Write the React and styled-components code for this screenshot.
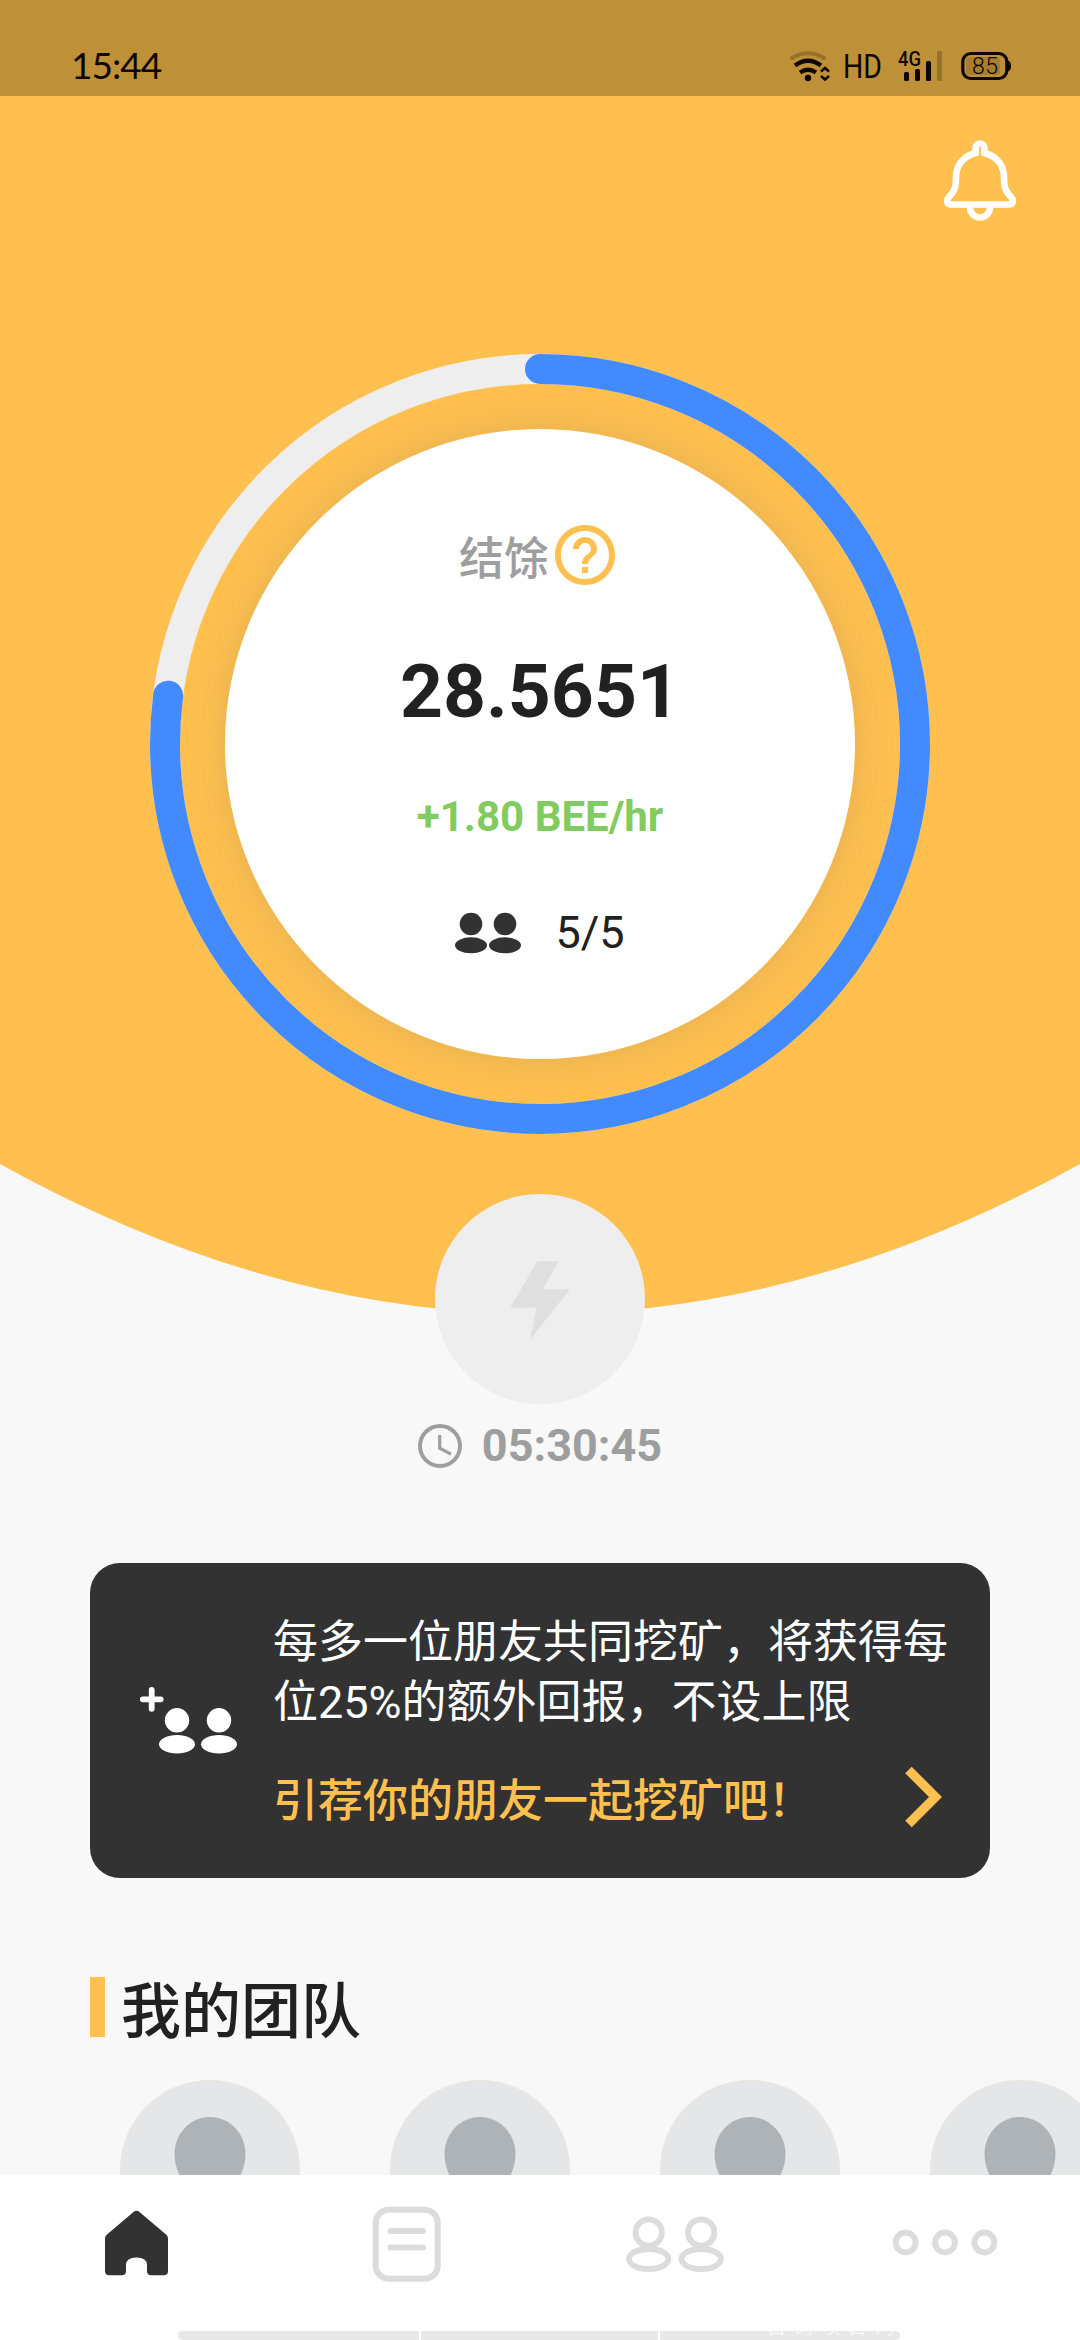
import styled, { createGlobalStyle } from "styled-components";
import { MdHelpOutline } from "react-icons/md";

const GlobalStyle = createGlobalStyle`
  * {
    box-sizing: border-box;
  }

  body {
    margin: 0;
    font-family: Roboto, "Noto Sans CJK SC", sans-serif;
    background-color: #f8f8f8;
  }

  svg {
    display: block;
    flex-shrink: 0;
  }
`;

const Screen = styled.div`
  display: flex;
  flex-direction: column;
  width: 1080px;
  height: 2340px;
  overflow: hidden;
  background-color: #f8f8f8;
`;

// Status bar
const StatusBar = styled.header`
  display: flex;
  justify-content: space-between;
  flex-shrink: 0;
  height: 96px;
  padding: 0 64px 0 71px;
  background-color: #be9139;
`;

const Clock = styled.span`
  padding-top: 42px;
  font-family: Lato, sans-serif;
  font-size: 37px;
  line-height: 46px;
  letter-spacing: -1px;
  color: #0d0700;
`;

const StatusIcons = styled.svg`
  font-family: Roboto, sans-serif;
`;

const Main = styled.main`
  flex: 1;
  min-height: 0;
  overflow: hidden;
`;

// Hero
const Hero = styled.section`
  display: grid;
  grid-template-columns: 1080px;

  & > * {
    grid-area: 1 / 1;
  }
`;

const HeroContent = styled.div`
  display: flex;
  flex-direction: column;
  align-items: center;
`;

const TopRow = styled.div`
  display: flex;
  justify-content: flex-end;
  align-self: stretch;
  padding: 43px 64px 0 0;
`;

const RingStack = styled.div`
  display: grid;
  place-items: center;
  width: 780px;
  height: 780px;
  margin-top: 131px;

  & > * {
    grid-area: 1 / 1;
  }
`;

const Dial = styled.div`
  display: flex;
  flex-direction: column;
  align-items: center;
  width: 630px;
  height: 630px;
  padding-top: 90px;
  border-radius: 50%;
  background-color: #fff;
  box-shadow: 0 0 45px rgba(100, 100, 100, 0.19);
`;

const BalanceLabel = styled.div`
  display: flex;
  align-items: center;
  height: 72px;
  font-size: 45px;
  font-weight: 500;
  color: #9e9e9e;
`;

const HelpIcon = styled(MdHelpOutline)`
  width: 72px;
  height: 72px;
  color: #ffc04f;
`;

const Balance = styled.div`
  margin-top: 56px;
  font-size: 75px;
  font-weight: 700;
  line-height: 88px;
  color: #212121;
`;

const Rate = styled.div`
  margin-top: 57px;
  font-size: 42px;
  font-weight: 700;
  line-height: 50px;
  color: #82cb61;
`;

const Members = styled.div`
  display: flex;
  align-items: center;
  gap: 34px;
  margin-top: 64px;
  font-size: 45px;
  line-height: 54px;
  color: #212121;
`;

const BoltButton = styled.button`
  display: grid;
  place-items: center;
  width: 210px;
  height: 210px;
  margin-top: 60px;
  padding: 0;
  border: none;
  border-radius: 50%;
  background-color: #eee;
`;

const Timer = styled.div`
  display: flex;
  align-items: center;
  gap: 20px;
  margin-top: 15px;
  font-size: 45px;
  font-weight: 700;
  line-height: 54px;
  color: #9e9e9e;
`;

// Invite card
const InviteCard = styled.section`
  display: flex;
  height: 315px;
  margin: 90px 90px 0;
  padding: 50px 40px 0 50px;
  border-radius: 30px;
  background-color: #323232;
`;

const InviteIcon = styled.svg`
  margin: 73px 36px 0 0;
`;

const InviteBody = styled.div`
  width: 680px;
`;

const InviteText = styled.p`
  margin: 0;
  font-size: 45px;
  line-height: 60px;
  color: #fff;
`;

const InviteAction = styled.div`
  display: flex;
  align-items: center;
  justify-content: space-between;
  height: 60px;
  margin-top: 39px;
  padding-right: 8px;
  font-size: 45px;
  font-weight: 500;
  line-height: 60px;
  color: #ffc04f;
`;

const Chevron = styled.svg`
  margin-bottom: 10px;
`;

// Team
const TeamTitle = styled.h2`
  display: flex;
  align-items: flex-start;
  gap: 16px;
  height: 60px;
  margin: 99px 0 0 90px;
  font-size: 60px;
  font-weight: 500;
  line-height: 71px;
  color: #212121;

  &::before {
    content: "";
    width: 15px;
    height: 60px;
    background-color: #ffc04f;
  }
`;

const TeamList = styled.div`
  display: flex;
  gap: 90px;
  margin-top: 43px;
  padding-left: 120px;
`;

const Avatar = styled.div`
  display: flex;
  justify-content: center;
  flex-shrink: 0;
  width: 180px;
  height: 180px;
  padding-top: 37px;
  border-radius: 50%;
  background-color: #e4e6e7;
  box-shadow: inset 0 1px 1px #efe8dc;
`;

// Bottom navigation
const BottomNav = styled.nav`
  display: flex;
  flex-direction: column;
  justify-content: space-between;
  flex-shrink: 0;
  height: 165px;
  background-color: #fff;
`;

const Tabs = styled.div`
  display: grid;
  grid-template-columns: repeat(4, 270px);
`;

const Tab = styled.a`
  display: grid;
  place-items: center;
  height: 138px;
  color: ${({ $active }) => ($active ? "#323232" : "#dcdcdc")};
`;

const Strip = styled.div`
  position: relative;
  display: grid;
  grid-template-columns: 241px 237px 240px;
  gap: 2px;
  width: 722px;
  height: 9px;
  margin-left: 178px;
`;

const StripPart = styled.div`
  background-color: #e8e8e8;

  &:first-child {
    border-radius: 5px 0 0 5px;
  }

  &:nth-child(3) {
    border-radius: 0 5px 5px 0;
  }
`;

const Watermark = styled.span`
  position: absolute;
  left: 589px;
  bottom: 0;
  font-family: "Noto Sans CJK SC", sans-serif;
  font-size: 19px;
  line-height: 28px;
  letter-spacing: 8px;
  white-space: nowrap;
  color: rgba(255, 255, 255, 0.7);
`;

const DAY = 24 * 3600;
const RING_RADIUS = 375;

function ProgressRing({ secondsLeft }) {
  const length = 2 * Math.PI * RING_RADIUS;
  const done = (1 - secondsLeft / DAY) * length;

  return (
    <svg width="780" height="780" viewBox="0 0 780 780" fill="none" strokeWidth="30">
      <circle cx="390" cy="390" r={RING_RADIUS} stroke="#eee" />
      <circle
        cx="390"
        cy="390"
        r={RING_RADIUS}
        stroke="#448aff"
        strokeLinecap="round"
        strokeDasharray={`${done} ${length}`}
        transform="rotate(-90 390 390)"
      />
    </svg>
  );
}

function PhoneStatus() {
  return (
    <StatusIcons width="228" height="96" viewBox="788 0 228 96" fill="none" stroke="#0d0700">
      {/* wifi */}
      <path d="M792 58q16-9.500 32 0" stroke="#98712a" strokeWidth="4" strokeLinecap="round" />
      <path d="M795 65.500q13-9.500 26 0M800 72.500q8-5.500 16 0" strokeWidth="4.200" />
      <circle cx="808" cy="78" r="3.200" fill="#0d0700" stroke="none" />
      <path d="M821 71.500l4-3.500 4 3.500M821 76l4 3.500 4-3.500" strokeWidth="2.600" />
      <g fill="#0d0700" stroke="none">
        <text x="843" y="78" fontSize="34" textLength="39" lengthAdjust="spacingAndGlyphs">
          HD
        </text>
        <text x="898" y="65.500" fontSize="20" fontWeight="500" textLength="23" lengthAdjust="spacingAndGlyphs">
          4G
        </text>
        {/* signal */}
        <rect x="904" y="72" width="5" height="9" rx="1.500" />
        <rect x="915" y="69" width="5" height="12" rx="1.500" />
        <rect x="926" y="61" width="5" height="20" rx="1.500" />
        <rect x="937" y="51" width="5" height="30" rx="1.500" fill="#98712a" />
        {/* battery */}
        <rect x="966" y="57" width="34" height="18" rx="4" fill="#a67d33" />
        <path d="M1008 60.500q3 1 3 5.500t-3 5.500z" />
        <text x="972" y="73.500" fontSize="23" fontWeight="300" textLength="26">
          85
        </text>
      </g>
      <rect x="962.800" y="53.500" width="44" height="25" rx="8" strokeWidth="3.200" />
    </StatusIcons>
  );
}

function Bell() {
  return (
    <svg width="72" height="84" viewBox="944 139 72 84" fill="none" stroke="#fff" strokeWidth="6.600">
      <path d="M975.500 153V148a4.500 4.500 0 0 1 9 0v5C997 156 1004 166 1004 177c0 9 .5 13 7 20 3.500 3.500 2 7.500-2 7.500h-58c-4 0-5.500-4-2-7.500 6.500-7 7-11 7-20 0-11 7-21 19.500-24z" />
      <path d="M974 152.500q6-2 12 0" />
      <path d="M980 147.500v7.500" stroke="#ffc04f" strokeWidth="1.800" />
      <path d="M970 207a10 10.500 0 0 0 20 0" />
    </svg>
  );
}

function Friends() {
  return (
    <svg width="66" height="42" viewBox="0 0 66 42" fill="#323232">
      <circle cx="16" cy="12" r="11.300" />
      <ellipse cx="16" cy="33.300" rx="16" ry="8" />
      <circle cx="50" cy="12" r="11.300" />
      <ellipse cx="50" cy="33.300" rx="16" ry="8" />
    </svg>
  );
}

function HomeIcon() {
  return (
    <svg width="70" height="80" viewBox="100 2204 70 80" fill="currentColor">
      <path d="M133.500 2212q3-2.500 6 0l26.500 22.500q2 1.600 2 4v32.500q0 4.300-4.300 4.300h-12.400q-4.300 0-4.300-4.300v-6q0-7.500-10.500-7.500t-10.500 7.500v6q0 4.300-4.300 4.300h-12.400q-4.300 0-4.300-4.300v-32.500q0-2.400 2-4z" />
    </svg>
  );
}

function NewsIcon() {
  return (
    <svg width="72" height="80" viewBox="369 2204 72 80" fill="none" stroke="currentColor" strokeWidth="6">
      <rect x="375.700" y="2209.700" width="62" height="69" rx="13" />
      <path d="M390.500 2231h32.500M390.500 2247.500h32.500" strokeLinecap="round" />
    </svg>
  );
}

function TeamIcon() {
  return (
    <svg width="100" height="70" viewBox="625 2209 100 70" fill="none" stroke="currentColor" strokeWidth="5.800">
      <circle cx="648.700" cy="2232.500" r="13.200" />
      <ellipse cx="648.700" cy="2259" rx="19.700" ry="10" />
      <circle cx="701.200" cy="2232.500" r="13.200" />
      <ellipse cx="701.200" cy="2259" rx="19.700" ry="10" />
    </svg>
  );
}

function MoreIcon() {
  return (
    <svg width="108" height="30" viewBox="-54 -13.500 108 30" fill="none" stroke="currentColor" strokeWidth="6">
      <circle cx="-39.400" r="9.900" />
      <circle r="9.900" />
      <circle cx="39.400" r="9.900" />
    </svg>
  );
}

function formatTime(seconds) {
  const parts = [Math.floor(seconds / 3600), Math.floor(seconds / 60) % 60, seconds % 60];
  return parts.map((part) => String(part).padStart(2, "0")).join(":");
}

function App() {
  const secondsLeft = 5 * 3600 + 30 * 60 + 45;
  const team = [1, 2, 3, 4];
  const tabs = [
    { name: "home", icon: HomeIcon },
    { name: "news", icon: NewsIcon },
    { name: "team", icon: TeamIcon },
    { name: "more", icon: MoreIcon },
  ];

  return (
    <Screen lang="zh-CN">
      <GlobalStyle />
      <StatusBar>
        <Clock>15:44</Clock>
        <PhoneStatus />
      </StatusBar>

      <Main>
        <Hero>
          <svg width="1080" height="1218" viewBox="0 0 1080 1218" fill="#ffc04f">
            <path d="M0 0h1080v1068q-540 300-1080 0z" />
          </svg>
          <HeroContent>
            <TopRow>
              <Bell />
            </TopRow>
            <RingStack>
              <ProgressRing secondsLeft={secondsLeft} />
              <Dial>
                <BalanceLabel>
                  结馀
                  <HelpIcon />
                </BalanceLabel>
                <Balance>28.5651</Balance>
                <Rate>+1.80 BEE/hr</Rate>
                <Members>
                  <Friends />
                  5/5
                </Members>
              </Dial>
            </RingStack>
            <BoltButton>
              <svg width="60" height="80" viewBox="510 1259 60 80" fill="#dfdfdf">
                <path d="M537.500 1261.300h21.200l-14.700 26q-1 2 1 2h24.900l-39.500 50 6-31.600h-26.400z" />
              </svg>
            </BoltButton>
            <Timer>
              <svg width="44" height="44" viewBox="0 0 44 44" fill="none" stroke="#9e9e9e">
                <circle cx="22" cy="22" r="20" strokeWidth="4" />
                <path d="M21.700 11v13.200l11.300 6" strokeWidth="3.200" />
              </svg>
              {formatTime(secondsLeft)}
            </Timer>
          </HeroContent>
        </Hero>

        <InviteCard>
          <InviteIcon width="97" height="68" viewBox="140 1686 97 68" fill="#fff">
            <path d="M142.700 1699.300h18M151.700 1689.800v19" stroke="#fff" strokeWidth="5.800" strokeLinecap="round" />
            <circle cx="177" cy="1720.300" r="12.200" />
            <ellipse cx="177" cy="1744.300" rx="18" ry="9.200" />
            <circle cx="219" cy="1720.300" r="12.200" />
            <ellipse cx="219" cy="1744.300" rx="18" ry="9.200" />
          </InviteIcon>
          <InviteBody>
            <InviteText>每多一位朋友共同挖矿，将获得每位25%的额外回报，不设上限</InviteText>
            <InviteAction>
              引荐你的朋友一起挖矿吧！
              <Chevron width="37" height="62" viewBox="0 0 37 62" fill="none" stroke="#ffc04f">
                <path d="M3.500 4l27 27-27 27" strokeWidth="9.200" />
              </Chevron>
            </InviteAction>
          </InviteBody>
        </InviteCard>

        <TeamTitle>我的团队</TeamTitle>
        <TeamList>
          {team.map((member) => (
            <Avatar key={member}>
              <svg width="72" height="80" viewBox="0 0 72 80" fill="#aeb3b7">
                <path d="M36 0C56 0 71.500 17 71.500 37S57 80 36 80 .5 57 .5 37 16 0 36 0z" />
              </svg>
            </Avatar>
          ))}
        </TeamList>
      </Main>

      <BottomNav>
        <Tabs>
          {tabs.map(({ name, icon: Icon }) => (
            <Tab key={name} $active={name === "home"}>
              <Icon />
            </Tab>
          ))}
        </Tabs>
        <Strip>
          <StripPart />
          <StripPart />
          <StripPart />
          <Watermark>首码项目网</Watermark>
        </Strip>
      </BottomNav>
    </Screen>
  );
}

export default App;
